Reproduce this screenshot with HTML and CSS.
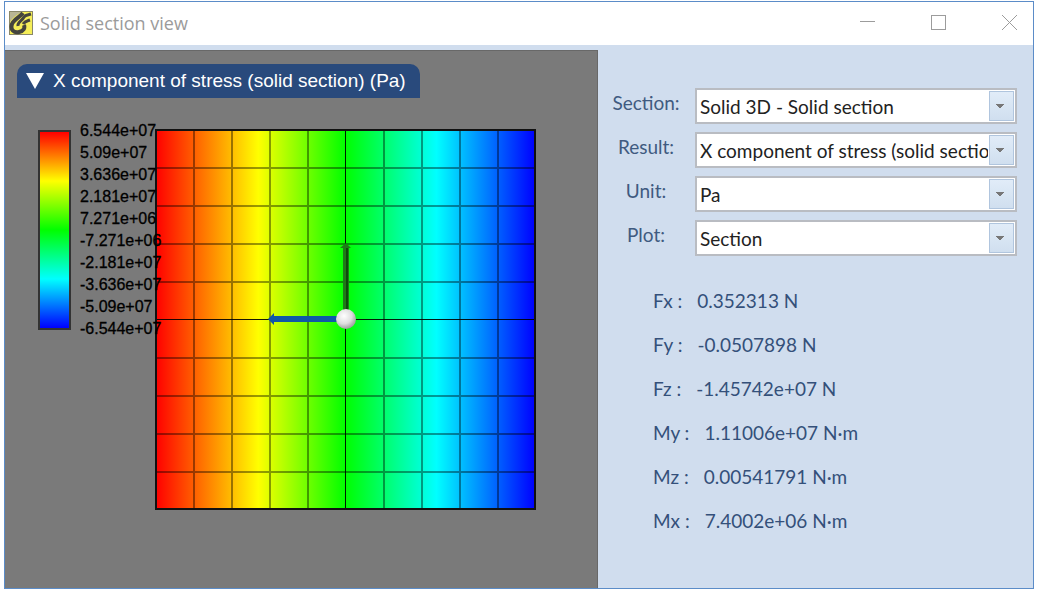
FILE: index.html
```html
<!DOCTYPE html>
<html lang="en">
<head>
  <meta charset="UTF-8">
  <title>Solid section view</title>
  <link rel="stylesheet" href="styles.css">
</head>
<body>

  <div class="window">
    <header class="titlebar">
      <svg class="app-icon" viewBox="0 0 24 24" aria-hidden="true">
        <rect x="0.5" y="0.5" width="23" height="23" fill="#f5ee58" stroke="#8a8868"/>
        <path d="M1 1H13C7 4 3 7 1 11Z" fill="#b9b694"/>
        <path d="M14 2C11 6 5 8 3 13C1 19 5 22 10 21C15 20 16 17 15 14" fill="none" stroke="#44443e" stroke-width="4"/>
        <path d="M9 15C8 11 13 10 15 6C16 4 19 4 22 3M14 13C16 10 18 10 21 9" fill="none" stroke="#44443e" stroke-width="3"/>
      </svg>
      <h1>Solid section view</h1>
      <div class="window-buttons">
        <button type="button" aria-label="Minimize"><svg viewBox="0 0 16 16"><path d="M0 6.5H15"/></svg></button>
        <button type="button" aria-label="Maximize"><svg viewBox="0 0 16 16"><rect x="0.5" y="0.5" width="14" height="14"/></svg></button>
        <button type="button" aria-label="Close"><svg viewBox="0 0 16 16"><path d="M0 0L15 15M15 0L0 15"/></svg></button>
      </div>
    </header>

    <main class="content">
      <section class="viewport">
        <button type="button" class="result-title">
          <svg viewBox="0 0 18 16" aria-hidden="true"><path d="M0 0H18L9 16Z" fill="#fff"/></svg>
          X component of stress (solid section) (Pa)
        </button>

        <div class="scene">
          <div class="legend">
            <div class="legend-bar"></div>
            <ul class="legend-labels">
              <li>6.544e+07</li>
              <li>5.09e+07</li>
              <li>3.636e+07</li>
              <li>2.181e+07</li>
              <li>7.271e+06</li>
              <li>-7.271e+06</li>
              <li>-2.181e+07</li>
              <li>-3.636e+07</li>
              <li>-5.09e+07</li>
              <li>-6.544e+07</li>
            </ul>
          </div>

          <svg class="plot" viewBox="0 0 381 381" role="img" aria-label="Stress plot">
            <defs>
              <linearGradient id="stress">
                <stop offset="0" stop-color="#f00"/>
                <stop offset="0.27" stop-color="#ff0"/>
                <stop offset="0.5" stop-color="#0f0"/>
                <stop offset="0.74" stop-color="#0ff"/>
                <stop offset="1" stop-color="#00f"/>
              </linearGradient>
              <radialGradient id="ball" cx="0.4" cy="0.35" r="0.65">
                <stop offset="0" stop-color="#fff"/>
                <stop offset="0.6" stop-color="#dedede"/>
                <stop offset="1" stop-color="#a0a0a0"/>
              </radialGradient>
            </defs>
            <rect x="1" y="1" width="379" height="379" fill="url(#stress)"/>
            <!-- mesh -->
            <path class="mesh" d="M39 1V380M77 1V380M115 1V380M153 1V380M229 1V380M267 1V380M305 1V380M343 1V380
              M1 39H380M1 77H380M1 115H380M1 153H380M1 229H380M1 267H380M1 305H380M1 343H380"/>
            <path class="mesh-main" d="M190.5 1V380M1 190.5H380"/>
            <rect class="frame" x="1" y="1" width="379" height="379"/>
            <!-- local axes -->
            <path d="M188 190V119H185L191 114L196 119H194V190Z" fill="#1f7a18"/>
            <path d="M192 119V190" stroke="#0f4a0c" stroke-width="2"/>
            <path d="M190 187H119V184L113 190L119 196V193H190Z" fill="#0f58a8"/>
            <circle cx="191" cy="190" r="10" fill="url(#ball)"/>
          </svg>
        </div>
      </section>

      <aside class="panel">
        <form class="options">
          <label for="section">Section:</label>
          <select id="section"><option>Solid 3D - Solid section</option></select>
          <label for="result">Result:</label>
          <select id="result"><option>X component of stress (solid section)</option></select>
          <label for="unit">Unit:</label>
          <select id="unit"><option>Pa</option></select>
          <label for="plot">Plot:</label>
          <select id="plot"><option>Section</option></select>
        </form>

        <dl class="forces">
          <div><dt>Fx :</dt><dd>0.352313 N</dd></div>
          <div><dt>Fy :</dt><dd>-0.0507898 N</dd></div>
          <div><dt>Fz :</dt><dd>-1.45742e+07 N</dd></div>
          <div><dt>My :</dt><dd>1.11006e+07 N·m</dd></div>
          <div><dt>Mz :</dt><dd>0.00541791 N·m</dd></div>
          <div><dt>Mx :</dt><dd>7.4002e+06 N·m</dd></div>
        </dl>
      </aside>
    </main>
  </div>

</body>
</html>
```
FILE: styles.css
```css
* { box-sizing: border-box; }
body { margin: 0; padding: 1px 3px 2px 4px; background: #fff; font-family: Lato, sans-serif; height: 100vh; }
button { border: 0; background: none; padding: 0; }

.window { display: flex; flex-direction: column; height: 100%; border: 1px solid #5b8cc8; background: #d0ddee; }

.titlebar { display: flex; align-items: center; height: 43px; padding: 0 15px 2px 4px; background: #fff; }
.titlebar h1 { flex: 1; margin: 0 0 0 7px; font: 18px "Open Sans", sans-serif; color: #9b9b9b; }
.app-icon { width: 24px; height: 24px; }
.window-buttons { display: flex; gap: 55px; }
.window-buttons svg { display: block; width: 16px; height: 16px; fill: none; stroke: #9c9c9c; }

.content { display: flex; flex: 1; margin-top: 5px; }

.viewport { width: 593px; padding: 13px 12px; background: #7a7a7a; border: 1px solid #686868; border-width: 1px 1px 0 0; }
.result-title { display: flex; align-items: center; gap: 9px; height: 34px; padding: 0 14px 0 9px; border-radius: 10px 10px 0 0; background: #294a7c; color: #fff; font: 19px "Liberation Sans", Arial, sans-serif; white-space: nowrap; }
.result-title svg { width: 18px; height: 16px; }

.scene { display: flex; align-items: flex-start; margin-top: 31px; }
.legend { display: flex; gap: 9px; width: 138px; padding: 1px 0 0 21px; position: relative; z-index: 1; }
.legend-bar { flex: none; width: 33px; height: 200px; border: 2px solid #333; background: linear-gradient(#f00, #ff0 25%, #0f0 50%, #0ff 75%, #00f); }
.legend-labels { list-style: none; margin: -10px 0; padding: 0; font: 16px/22px "Liberation Sans", Arial, sans-serif; color: #000; -webkit-text-stroke: 0.3px #000; white-space: nowrap; }
.plot { flex: none; width: 381px; height: 381px; }
.mesh { fill: none; stroke: #000; stroke-opacity: 0.4; stroke-width: 2; }
.mesh-main { fill: none; stroke: #000; stroke-opacity: 0.9; stroke-width: 1; }
.frame { fill: none; stroke: #111; stroke-width: 2; }

.panel { flex: 1; min-width: 0; padding: 38px 16px 0 9px; color: #3f5a80; font-size: 19px; }
.options { display: grid; grid-template-columns: 78px 1fr; column-gap: 10px; row-gap: 8px; }
.options label { line-height: 30px; text-align: center; }
.options select { appearance: none; width: 100%; min-width: 0; height: 36px; padding: 0 27px 0 3px; border: 2px solid #b9bcc2; border-radius: 0; color: #222; font: 19px Lato, sans-serif;
  /* arrow, button face, button edge */
  background:
    conic-gradient(from -40deg at 50% 100%, #777 80deg, transparent 0) right 11px center / 8px 5px no-repeat,
    linear-gradient(#e1ecf8, #d0dfef) right 2px center / 23px 28px no-repeat,
    linear-gradient(#b0c5de, #b0c5de) right 1px center / 25px 30px no-repeat,
    #fff; }

.forces { margin: 23px 0 0; padding-left: 46px; line-height: 44px; color: #34507a; }
.forces div { display: flex; gap: 15px; }
.forces dd { margin: 0; }
```
